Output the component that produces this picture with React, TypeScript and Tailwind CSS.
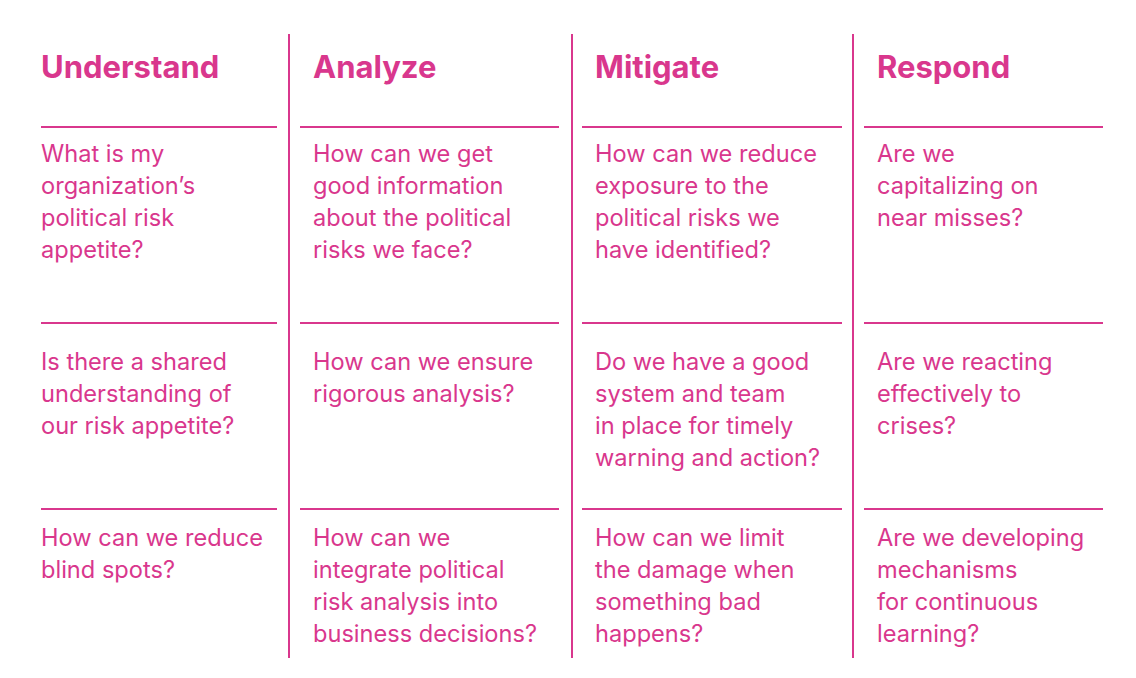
const pink = "#d9378d";

type Col = {
  title: string;
  rows: string[][];
};

const cols: Col[] = [
  {
    title: "Understand",
    rows: [
      ["What is my", "organization’s", "political risk", "appetite?"],
      ["Is there a shared", "understanding of", "our risk appetite?"],
      ["How can we reduce", "blind spots?"],
    ],
  },
  {
    title: "Analyze",
    rows: [
      ["How can we get", "good information", "about the political", "risks we face?"],
      ["How can we ensure", "rigorous analysis?"],
      ["How can we", "integrate political", "risk analysis into", "business decisions?"],
    ],
  },
  {
    title: "Mitigate",
    rows: [
      ["How can we reduce", "exposure to the", "political risks we", "have identified?"],
      ["Do we have a good", "system and team", "in place for timely", "warning and action?"],
      ["How can we limit", "the damage when", "something bad", "happens?"],
    ],
  },
  {
    title: "Respond",
    rows: [
      ["Are we", "capitalizing on", "near misses?"],
      ["Are we reacting", "effectively to", "crises?"],
      ["Are we developing", "mechanisms", "for continuous", "learning?"],
    ],
  },
];

const rowBoxes = [
  "h-[196px] pt-[10px]",
  "h-[186px] pt-[22px]",
  "h-[150px] pt-[12px]",
];

const widths = ["w-[236px]", "w-[259px]", "w-[260px]", "w-[239px]"];

function Column({ col, idx }: { col: Col; idx: number }) {
  const indent = idx === 0 ? "" : "pl-[13px]";
  return (
    <div className={`flex flex-col ${widths[idx]}`}>
      <div className={`h-[92px] pt-[14px] ${indent}`}>
        <h2 className="text-[31px] leading-[37px] font-bold">{col.title}</h2>
      </div>
      {col.rows.map((lines, i) => (
        <div key={i} className={`border-t-2 border-[#d9378d] ${rowBoxes[i]} ${indent}`}>
          <p className="text-[23.6px] leading-[32px] whitespace-nowrap">
            {lines.map((l, j) => (
              <span key={j} className="block">
                {l}
              </span>
            ))}
          </p>
        </div>
      ))}
    </div>
  );
}

function Divider({ className }: { className: string }) {
  return <div className={`w-[2px] self-stretch bg-[#d9378d] ${className}`} />;
}

export default function App() {
  return (
    <div
      className="w-[1136px] h-[678px] bg-white pt-[34px] pl-[41px] text-[#d9378d]"
      style={{ fontFamily: "Inter, 'Noto Sans', sans-serif", color: pink }}
    >
      <div className="flex">
        <Column col={cols[0]} idx={0} />
        <Divider className="ml-[11px] mr-[10px]" />
        <Column col={cols[1]} idx={1} />
        <Divider className="ml-[12px] mr-[9px]" />
        <Column col={cols[2]} idx={2} />
        <Divider className="ml-[10px] mr-[10px]" />
        <Column col={cols[3]} idx={3} />
      </div>
    </div>
  );
}
